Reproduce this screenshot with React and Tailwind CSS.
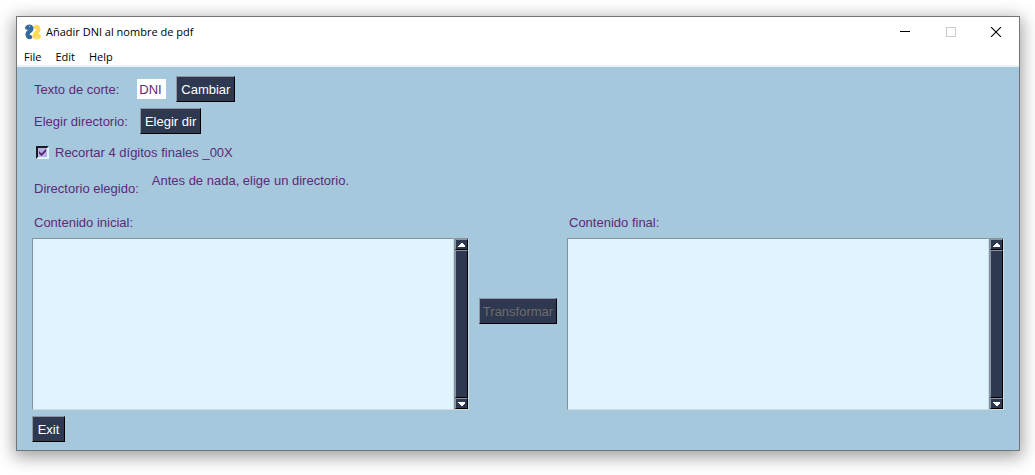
import React, { useState } from "react";

const raised =
  "border border-t-[#8b95a3] border-l-[#8b95a3] border-r-black border-b-black bg-[#2e3850]";

function PushButton({ children, disabled }) {
  return (
    <button
      type="button"
      disabled={disabled}
      className={`${raised} flex h-[26px] min-w-[33px] items-center justify-center px-1 pt-0.5 leading-5 whitespace-nowrap text-white disabled:px-[3px] disabled:text-[#6d6d6d]`}
    >
      {children}
    </button>
  );
}

function ArrowButton({ label, points }) {
  return (
    <button
      type="button"
      aria-label={label}
      className={`${raised} flex h-[11px] w-full shrink-0 items-center justify-center`}
    >
      <svg width="7" height="4" viewBox="0 0 7 4" shapeRendering="crispEdges">
        <polygon points={points} fill="#fff" />
      </svg>
    </button>
  );
}

function ListPane({ id, label }) {
  return (
    <div className="flex min-w-0 flex-1 flex-col">
      <label htmlFor={id} className="px-0.5">
        {label}
      </label>
      <div className="mt-[5px] flex h-[172px]">
        <textarea
          id={id}
          readOnly
          className="min-w-0 flex-1 resize-none border border-t-[#83929e] border-r-[#c8dce6] border-b-[#c8dce6] border-l-[#83929e] bg-[#e0f4ff] p-1 outline-none [scrollbar-width:none]"
        />
        <div className="flex w-[15px] flex-col border border-t-[#83929e] border-r-[#c8dce6] border-b-[#c8dce6] border-l-[#83929e]">
          <ArrowButton label={`Subir ${label}`} points="3,0 4,0 7,3 7,4 0,4 0,3" />
          <div className={`${raised} flex-1`} />
          <ArrowButton label={`Bajar ${label}`} points="0,0 7,0 7,1 4,4 3,4 0,1" />
        </div>
      </div>
    </div>
  );
}

function SnakeLogo() {
  return (
    <svg width="16" height="16" viewBox="0 0 16 16" aria-hidden="true">
      <path
        d="M13.8 12.2C12.8 13.9 10.4 13.8 9.6 12.2C8.6 9.6 13 8.6 13.4 5.9C13.6 3.8 12.4 2.8 10.8 3"
        fill="none"
        stroke="#ffd957"
        strokeWidth="4.2"
        strokeLinecap="round"
        strokeLinejoin="round"
      />
      <path
        d="M2.2 3.8C3.2 2.1 5.6 2.2 6.4 3.8C7.4 6.4 3 7.4 2.6 10.1C2.4 12.2 3.6 13.2 5.2 13"
        fill="none"
        stroke="#34699b"
        strokeWidth="4.2"
        strokeLinecap="round"
        strokeLinejoin="round"
      />
      <circle cx="4.6" cy="2.6" r=".5" fill="#fff" />
      <circle cx="11.4" cy="13.4" r=".5" fill="#fff" />
    </svg>
  );
}

export default function App() {
  const [cut, setCut] = useState("DNI");
  const [trim, setTrim] = useState(true);

  return (
    <div className="bg-white pt-4 pr-[15px] pb-6 pl-4 font-['Liberation_Sans',Arial,sans-serif] text-[13px] leading-5 text-[#5e2a78]">
      <div className="border border-[#717578] bg-white shadow-[0_4px_16px_2px_rgba(0,0,0,0.38)]">
        <header className="font-['Open_Sans','Noto_Sans',sans-serif] text-[11px] text-black">
          <div className="flex h-[30px] items-center pl-2">
            <SnakeLogo />
            <h1 className="ml-[5px] flex-1">Añadir DNI al nombre de pdf</h1>
            <button type="button" aria-label="Minimizar" className="flex h-full w-[46px] items-center justify-center">
              <svg width="10" height="10" viewBox="0 0 10 10" shapeRendering="crispEdges">
                <path d="M0 4.5H10" stroke="#000" />
              </svg>
            </button>
            <button type="button" disabled aria-label="Maximizar" className="flex h-full w-[45px] items-center justify-center">
              <svg width="10" height="10" viewBox="0 0 10 10" shapeRendering="crispEdges">
                <rect x=".5" y=".5" width="9" height="9" fill="none" stroke="#ccc" />
              </svg>
            </button>
            <button type="button" aria-label="Cerrar" className="flex h-full w-[46px] items-center justify-center">
              <svg width="10" height="10" viewBox="0 0 10 10">
                <path d="M0 0L10 10M10 0L0 10" stroke="#000" strokeWidth="1.1" />
              </svg>
            </button>
          </div>
          <nav className="flex h-5 items-center gap-[14px] border-b-2 border-[#ecf1f4] pt-0.5 pl-[7px]">
            <button type="button">File</button>
            <button type="button">Edit</button>
            <button type="button">Help</button>
          </nav>
        </header>

        <main className="bg-[#a5c8dc] px-[15px] pt-[9px] pb-2">
          <div className="flex items-center px-0.5">
            <label htmlFor="corte" className="pt-0.5">Texto de corte:</label>
            <input
              id="corte"
              value={cut}
              onChange={(e) => setCut(e.target.value)}
              className="ml-[18px] h-5 w-[29px] bg-white px-0.5 pt-0.5 outline-none"
            />
            <div className="ml-[10px] flex">
              <PushButton>Cambiar</PushButton>
            </div>
          </div>

          <div className="mt-1.5 flex items-center gap-3 px-0.5">
            <span className="pt-0.5">Elegir directorio:</span>
            <PushButton>Elegir dir</PushButton>
          </div>

          <label className="mt-[7px] flex items-center px-1">
            <span className="relative flex size-[13px]">
              <input
                type="checkbox"
                checked={trim}
                onChange={(e) => setTrim(e.target.checked)}
                className="size-[13px] appearance-none border-2 border-t-[#1c1c24] border-r-[#e3f1f8] border-b-[#e3f1f8] border-l-[#1c1c24] bg-[#b4b0e6]"
              />
              {trim && (
                <svg className="pointer-events-none absolute inset-0" width="13" height="13" viewBox="0 0 13 13">
                  <path d="M3 5V7.6L5.5 10L10 5.6V3L5.5 7.4Z" fill="#55206f" />
                </svg>
              )}
            </span>
            <span className="ml-1.5 pt-0.5">Recortar 4 dígitos finales _00X</span>
          </label>

          <div className="mt-2 flex h-9 gap-[13px] px-0.5">
            <span className="pt-2">Directorio elegido:</span>
            <output>Antes de nada, elige un directorio.</output>
          </div>

          <div className="mt-1.5 flex gap-[10px]">
            <ListPane id="inicial" label="Contenido inicial:" />
            <div className="flex w-[78px] items-center justify-center pb-0.5">
              <PushButton disabled>Transformar</PushButton>
            </div>
            <ListPane id="final" label="Contenido final:" />
          </div>

          <div className="mt-1.5 flex">
            <PushButton>Exit</PushButton>
          </div>
        </main>
      </div>
    </div>
  );
}
